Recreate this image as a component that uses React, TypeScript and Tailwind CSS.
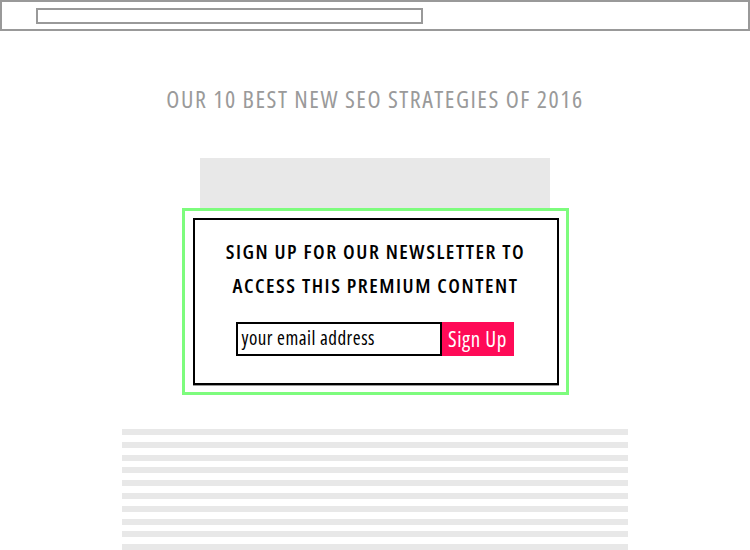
const lines = Array.from({ length: 10 }, (_, i) => i);

const App = () => {
  return (
    <div
      className="w-[750px] h-[550px] overflow-hidden bg-white"
      style={{ fontFamily: '"Open Sans", "DejaVu Sans", sans-serif' }}
    >
      {/* browser bar */}
      <div className="h-[31px] border-2 border-[#999999]">
        <div className="ml-[34px] mt-[6px] w-[387px] h-[16px] border-2 border-[#999999]" />
      </div>

      {/* title */}
      <h1 className="mt-[52px] h-[32px] text-center text-[24px] leading-[32px] font-medium tracking-[1.5px] text-[#9a9a9a] font-stretch-condensed">
        OUR 10 BEST NEW SEO STRATEGIES OF 2016
      </h1>

      {/* image placeholder */}
      <div className="mx-auto mt-[43px] w-[350px] h-[50px] bg-[#e8e8e8]" />

      {/* newsletter popup */}
      <div className="mx-auto w-[387px] h-[187px] border-[3px] border-[#7dfc7d] bg-white pt-[7px] pb-[7px] pl-[8px] pr-[7px]">
        <div className="h-full border-2 border-black shadow-[0_1px_0_rgba(0,0,0,0.4)] flex flex-col items-center">
          <div className="mt-[14px] text-center text-[20.5px] leading-[34px] font-semibold tracking-[1.55px] text-black font-stretch-condensed">
            <p>SIGN UP FOR OUR NEWSLETTER TO</p>
            <p>ACCESS THIS PREMIUM CONTENT</p>
          </div>
          <div className="mt-[20px] mr-[2px] flex">
            <div className="w-[206px] h-[34px] border-2 border-black pl-[4px] text-[19px] leading-[28px] tracking-[0.5px] text-black font-stretch-condensed">
              your email address
            </div>
            <button className="w-[72px] h-[34px] bg-[#ff0a57] text-white text-[21px] leading-[32px] tracking-[0.6px] font-stretch-condensed">
              Sign Up
            </button>
          </div>
        </div>
      </div>

      {/* text lines */}
      <div className="mx-auto mt-[34px] w-[506px] flex flex-col gap-[6.8px]">
        {lines.map((i) => (
          <div key={i} className="h-[6px] bg-[#e8e8e8]" />
        ))}
      </div>
    </div>
  );
};

export default App;
